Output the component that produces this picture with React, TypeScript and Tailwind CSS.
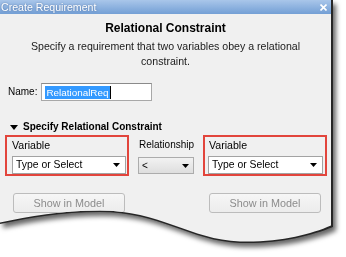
import React from "react";

const Arrow = () => (
  <svg width="7" height="4" viewBox="0 0 7 4" className="shrink-0">
    <path d="M0 0H7L3.5 4Z" fill="#000" />
  </svg>
);

const Combo = ({ w }: { w: string }) => (
  <div className={`${w} h-[18px] bg-white border border-[#a3a3a3] flex items-center justify-between pl-[3px] pr-[5px]`}>
    <span className="text-[10.4px] leading-none text-black">Type or Select</span>
    <Arrow />
  </div>
);

const Btn = () => (
  <div className="w-[112px] h-[20px] rounded-[3px] border border-[#bcbcbc] bg-gradient-to-b from-[#f6f6f6] to-[#ececec] flex items-center justify-center">
    <span className="text-[10.8px] leading-none text-[#8c8c8c]">Show in Model</span>
  </div>
);

export default function App() {
  return (
    <div className="w-[346px] h-[257px] bg-white overflow-hidden" style={{ fontFamily: '"Liberation Sans", Arial, sans-serif' }}>
      <div className="w-[334px] h-[248px] [filter:drop-shadow(3px_4px_2.5px_rgba(0,0,0,0.6))]">
        <div className="w-[334px] h-[248px] bg-[#262626] [clip-path:path('M0,0H333V227C310,236,280,244,240,243C190,241,160,212,100,212C60,212,30,218,0,224Z')]">
          <div className="w-[334px] h-[248px] bg-[#f0f0f0] flex flex-col [clip-path:path('M0,0H331V225.5C310,234.5,280,242.5,240,241.5C190,239.5,160,210.5,100,210.5C60,210.5,30,216.5,0,222.5Z')]">
            {/* title bar */}
            <div className="w-[331px] h-[14px] bg-gradient-to-b from-[#a9c6ea] to-[#739fd5] flex items-center justify-between pl-[1px] pr-[4px]">
              <span className="text-[10.6px] leading-none text-white [text-shadow:0_0_2px_rgba(40,70,120,0.6)]">Create Requirement</span>
              <svg width="7" height="7" viewBox="0 0 7 7">
                <path d="M0.5 0.5L6.5 6.5M6.5 0.5L0.5 6.5" stroke="#fff" strokeWidth="1.6" />
              </svg>
            </div>
            {/* content */}
            <div className="w-[331px] flex flex-col">
              <div className="mt-[7px] h-[14px] leading-[14px] text-center text-[12px] font-bold text-black">Relational Constraint</div>
              <div className="mt-[4px] text-center text-[10.6px] leading-[15px] text-[#1a1a1a]">
                <div>Specify a requirement that two variables obey a relational</div>
                <div>constraint.</div>
              </div>
              <div className="mt-[14px] flex items-center pl-[8px] gap-[4px]">
                <span className="text-[10px] leading-none text-black">Name:</span>
                <div className="w-[111px] h-[18px] bg-white border border-[#a8a8a8] border-t-[#8a8a8a] flex items-center pl-[3px]">
                  <span className="h-[13px] bg-[#3399ff] text-white text-[9.9px] leading-[13px] px-[1px]">RelationalReq</span>
                  <span className="w-[1px] h-[13px] bg-black" />
                </div>
              </div>
              <div className="mt-[19px] flex items-center pl-[10px] gap-[5px] h-[14px]">
                <svg width="8" height="5" viewBox="0 0 8 5">
                  <path d="M0 0H8L4 5Z" fill="#000" />
                </svg>
                <span className="text-[10px] font-bold leading-none text-black">Specify Relational Constraint</span>
              </div>
              <div className="mt-[1px] flex items-start pl-[5px]">
                <div className="w-[124px] h-[41px] border-2 border-[#e2453c] flex flex-col pl-[5px] pr-[1px] pt-[1px]">
                  <span className="h-[14px] leading-[14px] text-[10.6px] text-black">Variable</span>
                  <div className="mt-[4px]"><Combo w="w-[114px]" /></div>
                </div>
                <div className="ml-[9px] w-[56px] flex flex-col pt-[3px]">
                  <span className="h-[14px] leading-[14px] text-[10px] text-black pl-[1px]">Relationship</span>
                  <div className="mt-[5px] h-[17px] border border-[#acacac] bg-gradient-to-b from-[#f2f2f2] to-[#dedede] flex items-center justify-between pl-[3px] pr-[4px]">
                    <span className="text-[10px] leading-none text-black">&lt;</span>
                    <Arrow />
                  </div>
                </div>
                <div className="ml-[9px] w-[124px] h-[41px] border-2 border-[#e2453c] flex flex-col pl-[3px] pr-[2px] pt-[1px]">
                  <span className="h-[14px] leading-[14px] text-[10.6px] text-black pl-[1px]">Variable</span>
                  <div className="mt-[4px]"><Combo w="w-[115px]" /></div>
                </div>
              </div>
              <div className="mt-[17px] flex pl-[13px] gap-[84px]">
                <Btn />
                <Btn />
              </div>
            </div>
          </div>
        </div>
      </div>
    </div>
  );
}
